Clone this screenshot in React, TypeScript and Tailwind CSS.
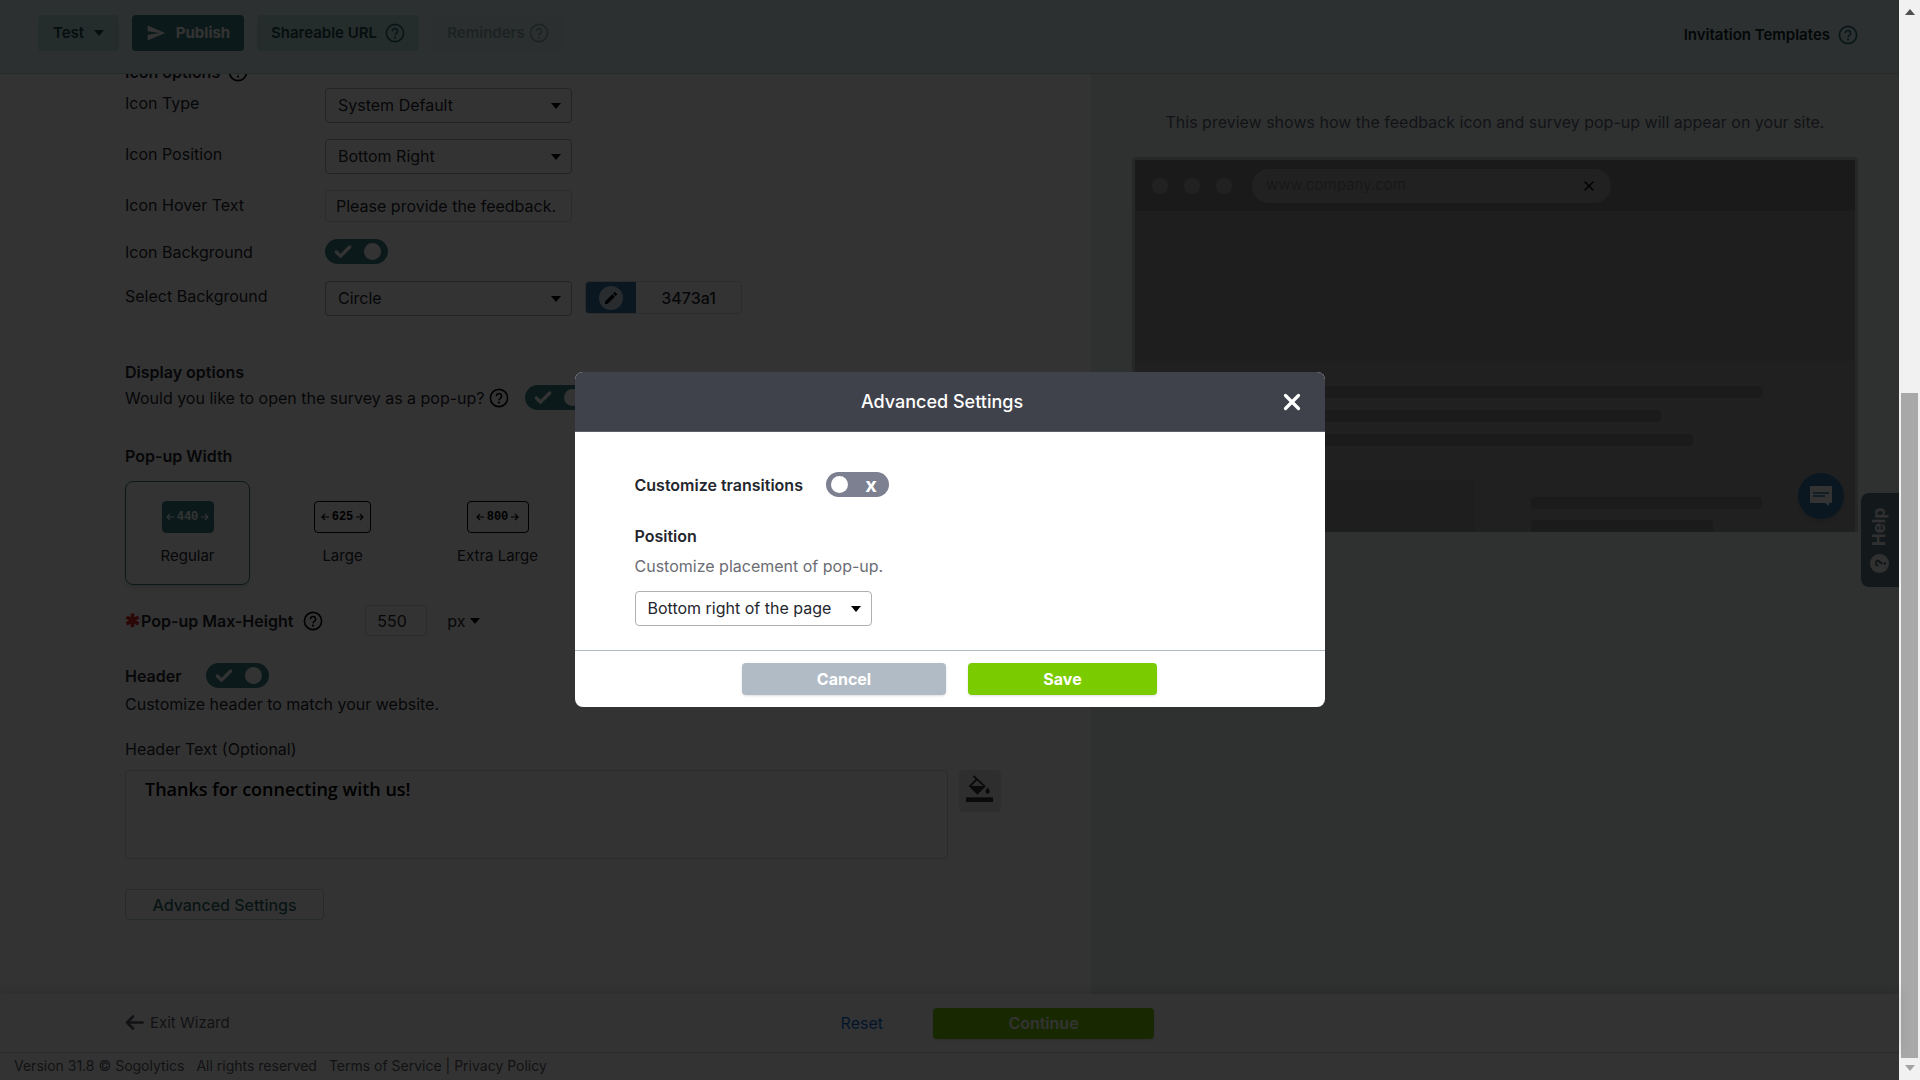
import type { ReactNode } from 'react';
import { Check, X } from 'lucide-react';
import { MdEdit, MdSend } from 'react-icons/md';

function HelpIcon({ className = '' }: { className?: string }) {
  return (
    <svg viewBox="0 0 20 20" className={`h-5 w-5 shrink-0 ${className}`} fill="none" stroke="currentColor" aria-hidden="true">
      <circle cx="10" cy="10" r="8.6" strokeWidth="1.6" />
      <path d="M7.4 8.2a2.6 2.6 0 1 1 4 2.1c-.9.6-1.4 1-1.4 2" strokeWidth="1.6" />
      <circle cx="10" cy="14.6" r="1.1" fill="currentColor" stroke="none" />
    </svg>
  );
}

function Caret({ className = '' }: { className?: string }) {
  return (
    <svg viewBox="0 0 10 6" className={`h-[6px] w-[10px] shrink-0 ${className}`} fill="currentColor" aria-hidden="true">
      <path d="M0 0h10L5 6z" />
    </svg>
  );
}

function SmallArrow({ className = '' }: { className?: string }) {
  return (
    <svg viewBox="0 0 8 8" className={`h-2 w-2 shrink-0 ${className}`} fill="none" stroke="currentColor" strokeWidth="1.1" aria-hidden="true">
      <path d="M8 4H1M4 1L1 4l3 3" />
    </svg>
  );
}

function PaintBucket() {
  return (
    <svg viewBox="0 0 27 27" className="h-[27px] w-[27px]" fill="#333" aria-hidden="true">
      <path d="M7.5 1l11 10.2-7.2 7.2L4 11l7-7" fill="none" stroke="#333" strokeWidth="1.8" />
      <path d="M4 11h14.6l-7.3 7.4z" />
      <path d="M21.6 12.6c1.3 1.9 2.1 3 2.1 4.1a2.1 2.1 0 0 1-4.2 0c0-1.1.8-2.2 2.1-4.1z" />
      <path d="M0 22.3h27V27H0z" />
    </svg>
  );
}

function SelectBox({ id, value, className = '' }: { id: string; value: string; className?: string }) {
  return (
    <div className={`relative ${className}`}>
      <select
        id={id}
        defaultValue={value}
        className="h-[35px] w-full appearance-none rounded border border-[#b0b0b0] bg-white pb-px pl-3 text-[16px] text-[#24262d]"
      >
        <option>{value}</option>
      </select>
      <Caret className="pointer-events-none absolute top-[15px] right-[11px] text-black" />
    </div>
  );
}

function Toggle({ id, on }: { id: string; on?: boolean }) {
  return (
    <span className={`relative flex h-[25px] w-[63px] shrink-0 items-center justify-between rounded-full ${on ? 'bg-[#3a7d80] pr-[7px] pl-[8px]' : 'bg-[#7c8090] pr-[12px] pl-[5px]'}`}>
      {on ? (
        <>
          <Check className="h-5 w-5 text-white" strokeWidth={4} />
          <span className="h-[17px] w-[17px] rounded-full bg-white" />
        </>
      ) : (
        <>
          <span className="h-[17px] w-[17px] rounded-full bg-white" />
          <span aria-hidden="true" className="text-[20px] leading-[20px] font-bold text-white">
            x
          </span>
        </>
      )}
      <input id={id} type="checkbox" role="switch" defaultChecked={on} className="absolute inset-0 opacity-0" />
    </span>
  );
}

function FieldRow({ id, label, children }: { id: string; label: string; children: ReactNode }) {
  return (
    <div className="flex items-start">
      <label htmlFor={id} className="w-[200px] leading-[31px]">
        {label}
      </label>
      {children}
    </div>
  );
}

const sizes = [
  { name: 'Regular', px: 440, active: true, box: 'w-[52px] border-[#3a7d80] bg-[#3a7d80] text-white' },
  { name: 'Large', px: 625, active: false, box: 'w-[57px] border-black text-black' },
  { name: 'Extra Large', px: 800, active: false, box: 'w-[62px] border-black text-black' },
];

function Header() {
  return (
    <header className="z-10 flex h-[74px] items-start justify-between border-b border-[#c3d2d4] bg-[#dcf0f2] pr-[41px] pl-[38px] text-[15px] font-semibold">
      <div className="flex gap-[13px] pt-[15px]">
        <button className="flex h-9 w-[81px] items-center justify-center gap-[10px] rounded bg-[#b9dfda] text-[#1c4a4a]">
          Test <Caret />
        </button>
        <button className="flex h-9 w-[112px] items-center justify-center gap-[10px] rounded bg-[#3a7d80] font-bold text-white">
          <MdSend className="h-5 w-5" /> Publish
        </button>
        <button className="flex h-9 w-[162px] items-center justify-center gap-[8px] rounded bg-[#b9dfda] text-[#1c4a4a]">
          Shareable URL <HelpIcon className="text-[#2c6a6c]" />
        </button>
        <button className="flex h-9 w-[132px] items-center justify-center gap-1 rounded bg-[#d4e8e9] text-[#93aaae]">
          Reminders <HelpIcon />
        </button>
      </div>
      <a href="#templates" className="flex items-center gap-2 pt-[24px] text-[#12282a]">
        Invitation Templates <HelpIcon className="text-[#2c6a6c]" />
      </a>
    </header>
  );
}

function SettingsForm() {
  return (
    <section className="bg-white pr-[90px] pl-[125px] text-[16px] text-[#24262d]">
      <h2 className="-mt-[18px] flex h-8 items-center gap-2 font-semibold">
        Icon options <HelpIcon className="text-black" />
      </h2>

      <div className="flex flex-col gap-4">
        <FieldRow id="icon-type" label="Icon Type">
          <SelectBox id="icon-type" value="System Default" className="w-[247px]" />
        </FieldRow>
        <FieldRow id="icon-position" label="Icon Position">
          <SelectBox id="icon-position" value="Bottom Right" className="w-[247px]" />
        </FieldRow>
        <FieldRow id="hover-text" label="Icon Hover Text">
          <input
            id="hover-text"
            defaultValue="Please provide the feedback."
            className="h-8 w-[247px] rounded border border-[#d5d5d5] px-[10px]"
          />
        </FieldRow>
        <div className="flex h-[27px] items-center">
          <label htmlFor="icon-bg" className="w-[200px]">
            Icon Background
          </label>
          <Toggle id="icon-bg" on />
        </div>
        <FieldRow id="bg-shape" label="Select Background">
          <SelectBox id="bg-shape" value="Circle" className="w-[247px]" />
          <div className="ml-[13px] flex h-[33px] w-[157px] overflow-hidden rounded border border-[#d5d5d5]">
            <button aria-label="Pick colour" className="flex w-[50px] items-center justify-center bg-[#3473a1]">
              <span className="flex h-6 w-6 items-center justify-center rounded-full bg-[#c9dbe6]">
                <MdEdit className="h-4 w-4 text-black" />
              </span>
            </button>
            <input aria-label="Background colour" defaultValue="3473a1" className="w-0 flex-1 text-center font-medium" />
          </div>
        </FieldRow>
      </div>

      <h2 className="mt-[43px] leading-[26px] font-semibold">Display options</h2>
      <div className="flex h-[25px] items-center">
        <label htmlFor="as-popup">Would you like to open the survey as a pop-up?</label>
        <HelpIcon className="mr-4 ml-1 text-black" />
        <Toggle id="as-popup" on />
      </div>

      <h2 className="mt-[34px] leading-[24px] font-semibold">Pop-up Width</h2>
      <div className="mt-[13px] flex gap-[30px] text-[15px]">
        {sizes.map((s) => (
          <button
            key={s.name}
            className={`flex h-[104px] w-[125px] flex-col items-center rounded-lg border pt-[19px] ${s.active ? 'border-[#3a7d80] shadow-md' : 'border-transparent'}`}
          >
            <span className={`flex h-8 items-center justify-center gap-[3px] rounded border font-['Liberation_Mono',monospace] text-[12px] font-bold ${s.box}`}>
              <SmallArrow />
              {s.px}
              <SmallArrow className="rotate-180" />
            </span>
            <span className="mt-3 leading-[22px]">{s.name}</span>
          </button>
        ))}
      </div>

      <div className="mt-5 flex h-[31px] items-center">
        <span className="w-4 text-[18px] leading-[20px] font-bold text-[#e02b2b]">✱</span>
        <label htmlFor="max-height" className="font-semibold">
          Pop-up Max-Height
        </label>
        <HelpIcon className="ml-[10px] text-black" />
        <input id="max-height" defaultValue="550" className="ml-[42px] h-[31px] w-[62px] rounded border border-[#d5d5d5] px-[11px]" />
        <button className="ml-5 flex items-center gap-1">
          px <Caret className="text-black" />
        </button>
      </div>

      <div className="mt-[27px] flex h-[25px] items-center gap-6">
        <label htmlFor="header-on" className="leading-[20px] font-semibold">
          Header
        </label>
        <Toggle id="header-on" on />
      </div>
      <p className="mt-1 leading-[24px]">Customize header to match your website.</p>

      <label htmlFor="header-text" className="mt-[21px] block leading-[24px]">
        Header Text (Optional)
      </label>
      <div className="mt-[9px] flex items-start gap-[11px]">
        <textarea
          id="header-text"
          defaultValue="Thanks for connecting with us!"
          className="h-[89px] flex-1 resize-none rounded border border-[#d5d5d5] px-[19px] py-[6px] font-['Open_Sans',sans-serif] text-[18px] leading-[24px] font-semibold text-black"
        />
        <button aria-label="Fill colour" className="flex h-[42px] w-[42px] items-start justify-center rounded bg-[#e4e4e4] pt-[5px]">
          <PaintBucket />
        </button>
      </div>

      <button className="mt-[30px] mb-16 h-[31px] w-[199px] rounded border border-[#b9cfd0] font-medium text-[#2f6a6c]">
        Advanced Settings
      </button>
    </section>
  );
}

function SitePreview() {
  return (
    <section className="bg-[#ebf5f0] px-[41px] text-center text-[16px] text-[#5f6275]">
      <p className="mt-9 leading-[24px]">This preview shows how the feedback icon and survey pop-up will appear on your site.</p>
      <div className="relative mt-[23px] flex h-[375px] flex-col overflow-hidden rounded-t border-[3px] border-b-0 border-[#bfc5c2] bg-[#a0a0a0]">
        <div className="flex h-[51px] shrink-0 items-center gap-4 bg-[#828282] pl-[17px]">
          <span className="h-4 w-4 rounded-full bg-[#a5a5a5]" />
          <span className="h-4 w-4 rounded-full bg-[#a5a5a5]" />
          <span className="h-4 w-4 rounded-full bg-[#a5a5a5]" />
          <div className="ml-1 flex h-[34px] w-[51%] items-center justify-between rounded-full bg-[#a5a5a5] pr-[14px] pl-[14px] text-[15px] text-[#7a7a7a]">
            www.company.com
            <X className="h-4 w-4 text-black" strokeWidth={2} />
          </div>
        </div>
        <div className="h-[150px] shrink-0 bg-[#969696]" />
        <div className="flex flex-col gap-3 pt-[25px] pr-[93px] pl-[93px]">
          <div className="h-3 rounded bg-[#868686]" />
          <div className="h-3 w-[81%] rounded bg-[#868686]" />
          <div className="h-3 w-[87%] rounded bg-[#868686]" />
        </div>
        <div className="mt-[34px] flex flex-1 pr-[93px] pl-[93px]">
          <div className="w-[247px] bg-[#989898]" />
          <div className="ml-[56px] flex flex-1 flex-col gap-[11px] pt-[17px]">
            <div className="h-3 rounded bg-[#868686]" />
            <div className="h-3 w-[79%] rounded-t bg-[#868686]" />
          </div>
        </div>
        <button aria-label="Feedback" className="absolute right-[11px] bottom-[13px] flex h-[46px] w-[46px] items-center justify-center rounded-full bg-[#3473a1] shadow-md">
          <svg viewBox="0 0 22 20" className="h-5 w-[22px]" aria-hidden="true">
            <path d="M1 0h20q1 0 1 1v15q0 1-1 1h-2v3l-4-3H1q-1 0-1-1V1q0-1 1-1z" fill="#fff" />
            <path d="M3 7h16M3 10h12" stroke="#3473a1" strokeWidth="1.6" />
          </svg>
        </button>
      </div>
    </section>
  );
}

function Footer() {
  return (
    <footer className="z-10 bg-white text-[#5a5c66]">
      <div className="flex h-[58px] items-center pl-[125px] text-[15px] shadow-[0_-4px_12px_rgba(0,0,0,0.12)]">
        <a href="#exit" className="flex items-center gap-[6px]">
          <svg viewBox="0 0 19 16" className="h-4 w-[19px]" fill="none" stroke="currentColor" strokeWidth="2.6" strokeLinecap="round" strokeLinejoin="round" aria-hidden="true">
            <path d="M17.6 7.5H2M8 1.5l-6 6 6 6" />
          </svg>
          Exit Wizard
        </a>
        <a href="#reset" className="ml-auto text-[16px] text-[#0a6cd6]">
          Reset
        </a>
        <button className="mr-[745px] ml-[50px] h-[31px] w-[221px] rounded bg-[#7ac900] text-[16px] font-semibold text-white shadow">
          Continue
        </button>
      </div>
      <div className="flex h-[28px] items-center gap-3 border-t border-[#d8d8d8] pb-[2px] pl-[14px] text-[14px]">
        <span>Version 31.8 © Sogolytics</span>
        <span>All rights reserved</span>
        <span>
          <a href="#terms">Terms of Service</a> | <a href="#privacy">Privacy Policy</a>
        </span>
      </div>
    </footer>
  );
}

function AdvancedSettingsDialog() {
  return (
    <div role="dialog" aria-labelledby="dialog-title" className="w-[750px] overflow-hidden rounded-lg bg-white text-[16px] text-[#24262d]">
      <div className="flex h-[60px] items-center border-b border-[#5c5f68] bg-[#3f424b] pr-5 pl-[31px] text-white">
        <h1 id="dialog-title" className="flex-1 text-center text-[18px] font-medium">
          Advanced Settings
        </h1>
        <button aria-label="Close">
          <X className="h-[26px] w-[26px]" strokeWidth={3} />
        </button>
      </div>
      <div className="px-[60px] pt-10 pb-6">
        <div className="flex h-[25px] items-center gap-[23px]">
          <label htmlFor="transitions" className="leading-[24px] font-semibold">
            Customize transitions
          </label>
          <Toggle id="transitions" />
        </div>
        <label htmlFor="position" className="mt-[27px] block leading-[24px] font-semibold">
          Position
        </label>
        <p className="mt-[6px] leading-[24px] text-[#6b6d73]">Customize placement of pop-up.</p>
        <SelectBox id="position" value="Bottom right of the page" className="mt-[13px] w-[237px]" />
      </div>
      <div className="flex h-[57px] items-start justify-center gap-[22px] border-t border-[#b0bcc6] pt-3 font-bold text-white">
        <button className="h-8 w-[204px] rounded bg-[#b1bbc5] pb-px shadow">Cancel</button>
        <button className="h-8 w-[189px] rounded bg-[#7acb00] pb-px shadow">Save</button>
      </div>
    </div>
  );
}

export default function App() {
  return (
    <div className="flex min-h-screen font-['Inter',sans-serif]">
      <div className="relative flex flex-1 flex-col">
        <Header />
        <main className="grid flex-1 grid-cols-[57.45%_1fr]">
          <SettingsForm />
          <SitePreview />
        </main>
        <Footer />
        <button className="absolute top-[493px] right-0 flex h-[94px] w-[38px] rotate-180 items-center justify-center gap-2 rounded-r-lg bg-[#5f7f88] text-[17px] font-bold text-[#f0f0f0] [writing-mode:vertical-rl]">
          <span className="flex h-[19px] w-[19px] items-center justify-center rounded-full bg-[#f0f0f0] text-[14px] text-[#4a6a72]">?</span>
          Help
        </button>
        <div className="absolute inset-0 z-20 flex items-start justify-center bg-black/80 pt-[372px]">
          <AdvancedSettingsDialog />
        </div>
      </div>
      <div aria-hidden="true" className="flex w-[21px] flex-col items-center bg-[#f1f1f1] pt-[9px] pb-[9px]">
        <Caret className="rotate-180 text-[#505050]" />
        <div className="mt-[378px] w-[17px] flex-1 bg-[#a8a8a8]" />
        <Caret className="mt-[7px] text-[#a3a3a3]" />
      </div>
    </div>
  );
}
